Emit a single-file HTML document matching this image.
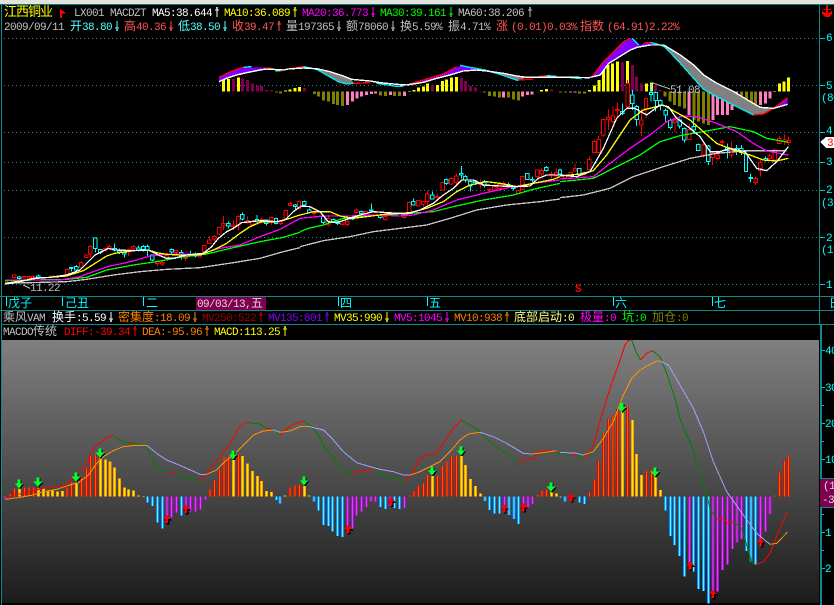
<!DOCTYPE html>
<html><head><meta charset="utf-8"><style>
html,body{margin:0;padding:0;background:#000;width:834px;height:605px;overflow:hidden}
svg{position:absolute;left:0;top:0;shape-rendering:crispEdges}
text{font:11px "Liberation Mono","WenQuanYi Zen Hei","Noto Sans CJK SC",monospace;letter-spacing:-.6px;white-space:pre}
.c{font-family:"WenQuanYi Zen Hei","Noto Sans CJK SC",sans-serif;font-size:12px;letter-spacing:0}
.n{vector-effect:non-scaling-stroke;fill:none}
.b{vector-effect:non-scaling-stroke;fill:#000;stroke-width:1}
.m{stroke-width:1.3}
.t{stroke-width:1}
.rb{stroke-width:1.4}
.gr{fill:none;stroke:#1a8a8a;stroke-dasharray:1 3}
</style></head><body>
<svg width="834" height="605" viewBox="0 0 834 605" xmlns="http://www.w3.org/2000/svg">
<defs>
<linearGradient id="pg" x1="0" y1="0" x2="0" y2="1"><stop offset="0" stop-color="#808080"/><stop offset="1" stop-color="#1c1c1c"/></linearGradient>
<path id="u" d="M3 7V17M2 8h2M1 10h4" fill="none"/>
<path id="d" d="M3 7V17M2 16h2M1 14h4" fill="none"/>
<g id="ga"><path fill="#000" transform="translate(3,3)" d="M-5-14h10v12h8l-13 15-13-15h8z"/><path fill="#00ff30" d="M-5-14h10v12h8l-13 15-13-15h8z"/></g>
<g id="ra"><path fill="#000" transform="translate(4,4)" d="M-4 12h8V0h8l-12-13-12 13h8z"/><path fill="#ff0000" d="M-4 12h8V0h8l-12-13-12 13h8z"/></g>
<g id="BR" fill="none">
<path transform="scale(.33333)" d="M30 229V222M44 229V205M73 229V203M87 229V203M101 229V203M201 229V202M215 229V187M244 229V172M259 229V145M272 229V108M287 229V103M630 229V208M644 229V180M658 229V148M672 229V113M686 229V110M716 229V103"/>
<path transform="translate(280,0) scale(.33333)" d="M30 229V203M45 229V197M58 229V193M388 229V226M402 229V213M416 229V197M430 229V190M443 229V165M472 229V168M487 229V138M501 229V124M515 229V108M530 229V106M772 229V225M786 229V212M800 229V208"/>
<path transform="translate(560,-85) scale(.33333)" d="M88 484V472M103 484V433M116 484V378M130 484V295M145 484V252M159 484V240M173 484V222M202 484V214M259 484V408M274 484V405M644 484V481M658 484V412M673 484V378M686 484V362"/>
</g>
<g id="BY" fill="none">
<path transform="scale(.33333)" d="M58 229V205M116 229V205M130 229V204M144 229V212M158 229V212M172 229V215M187 229V213M229 229V187M301 229V115M316 229V118M330 229V125M344 229V142M359 229V175M373 229V202M386 229V208M400 229V211M416 229V226M431 229V228M701 229V120M728 229V108M743 229V130M758 229V153M772 229V168M785 229V183M800 229V213M815 229V216"/>
<path transform="translate(280,0) scale(.33333)" d="M15 229V227M73 229V198M87 229V227M457 229V168M544 229V108M557 229V135M572 229V177M586 229V198M601 229V220M814 229V216M829 229V220"/>
<path transform="translate(560,-85) scale(.33333)" d="M187 484V230M217 484V255M230 484V357M245 484V420M287 484V425M301 484V465"/>
</g>
<g id="BB" fill="none">
<path transform="scale(.33333)" d="M443 229V248M458 229V258M472 229V308M487 229V326M544 229V287M830 229V240"/>
<path transform="translate(280,0) scale(.33333)" d="M0 229V250M102 229V245M115 229V272M130 229V315M145 229V318M158 229V335M172 229V348M187 229V351M301 229V261M316 229V267M344 229V264M358 229V267M615 229V243M629 229V270M644 229V280M659 229V280M687 229V285M702 229V297M716 229V312"/>
<path transform="translate(560,-85) scale(.33333)" d="M1 484V487M15 484V500M58 484V503M73 484V507M316 484V527M331 484V603M344 484V630M359 484V663M374 484V725M401 484V710M416 484V762M431 484V768M445 484V805M560 484V648M573 484V680M587 484V688"/>
</g>
<g id="BP" fill="none">
<path transform="scale(.33333)" d="M15 229V234M501 229V308M515 229V293M530 229V278M558 229V280M572 229V275M587 229V275M602 229V268M616 229V238"/>
<path transform="translate(280,0) scale(.33333)" d="M202 229V330M217 229V325M230 229V287M245 229V275M259 229V261M273 229V245M287 229V245M330 229V258M373 229V264M673 229V272M730 229V260M744 229V262M758 229V252"/>
<path transform="translate(560,-85) scale(.33333)" d="M30 484V498M388 484V690M459 484V775M473 484V770M488 484V705M503 484V688M517 484V642M531 484V623M545 484V612M602 484V620M617 484V590M630 484V537"/>
</g>
</defs>

<!-- chrome -->
<rect x="0" y="0" width="834" height="4" fill="#e4e2dc"/>
<rect x="0" y="4" width="834" height="1" fill="#008080"/>
<rect x="1" y="4" width="1" height="601" fill="#108a8a"/>
<rect x="819" y="4" width="1" height="321" fill="#108a8a"/>

<!-- grid -->
<path class="gr" d="M4 38.5H819M4 85.5H819M4 132.5H819M4 162.5H819M4 190.5H819M4 237.5H819M4 284.5H819"/>

<!-- MACDZT bars -->
<g transform="translate(210,60) scale(.33333)" stroke-width="9" fill="none">
<path stroke="#ffff00" d="M40 95V58M55 95V57M85 95V52M226 95V92M240 95V88M255 95V84M269 95V81M598 95V93M612 95V90M625 95V83M640 95V80M653 95V71M682 95V75M697 95V63M710 95V59M725 95V53M739 95V51M981 95V94M995 95V90M1009 95V87M1138 95V90M1153 95V77M1167 95V60"/>
<path stroke="#800050" d="M70 95V57M98 95V55M113 95V60M127 95V70M142 95V76M155 95V78M170 95V90M184 95V90M283 95V84M298 95V94M668 95V75M754 95V54M767 95V63M781 95V78M796 95V83M811 95V93M1024 95V89M1039 95V94"/>
<path stroke="#808000" d="M199 95V98M212 95V100M313 95V102M326 95V110M340 95V122M355 95V125M370 95V132M383 95V135M397 95V138M512 95V106M526 95V108M554 95V108M569 95V108M824 95V97M839 95V108M853 95V110M868 95V113M895 95V113M910 95V118M925 95V122M1052 95V98M1066 95V98M1109 95V101M1124 95V101"/>
<path stroke="#ff80c0" d="M412 95V135M427 95V125M441 95V115M455 95V110M470 95V105M484 95V102M497 95V101M541 95V105M583 95V108M881 95V113M938 95V110M952 95V105M966 95V103M1081 95V97M1095 95V98"/>
</g>
<g transform="translate(600,40) scale(.33333)" stroke-width="9" fill="none">
<path stroke="#ffff00" d="M10 155V90M24 155V75M38 155V70M53 155V65M82 155V63M140 155V130M155 155V128M524 155V153M538 155V130M552 155V125M566 155V113"/>
<path stroke="#800050" d="M67 155V68M97 155V75M110 155V110M125 155V130M167 155V135M180 155V150"/>
<path stroke="#808000" d="M195 155V170M210 155V185M224 155V195M238 155V200M253 155V205M282 155V240M296 155V245M311 155V250M325 155V255M425 155V200M440 155V205M455 155V200M467 155V195"/>
<path stroke="#ff80c0" d="M267 155V225M339 155V240M353 155V225M368 155V225M382 155V225M396 155V210M410 155V200M482 155V195M496 155V190M510 155V175"/>
</g>

<!-- ribbon -->
<g transform="translate(210,60) scale(.33333)">
<path fill="#8000ff" d="M27 65L50 55 80 45 110 38 150 30 170 27 165 23 125 22 110 18 80 28 50 40 27 52z"/>
<path fill="#808080" d="M320 26L360 35 400 48 425 58 430 70 410 72 385 65 350 45 320 28z"/>
<path fill="#8000ff" d="M590 75L640 67 680 55 720 45 760 33 800 30 825 30 780 22 755 15 700 42 650 57 590 73z"/>
<path fill="#808080" d="M830 33L880 40 920 48 950 52 925 62 870 43 830 35z"/>
<path class="n rb" stroke="#00e8f0" d="M100 22L125 20M195 32L215 33M280 20L320 28 350 45 385 65 410 72 430 70M500 70L560 79 580 79M750 16L780 22 825 30 870 43 925 62M1010 47L1040 49M1075 52L1115 56"/>
<path class="n rb" stroke="#ff0000" d="M27 52L50 40 80 28 100 22M165 24L185 24M210 32L235 27 280 20M430 70L480 68M590 75L650 57 700 42 740 20M925 60L970 57M985 50L1010 47"/>
<path class="n rb" stroke="#ffffff" d="M27 65L50 55 80 45 110 38 150 30 170 27 220 30 235 27 280 24 320 26 360 35 400 48 425 58 480 63 510 68 560 73 590 75 640 67 680 55 720 45 760 33 800 30 830 33 880 40 920 48 950 52 1000 52 1040 52 1090 52 1140 53"/>
</g>
<g transform="translate(417,0) scale(.33333)">
<path fill="#8000ff" d="M520 232L550 225 575 190 600 175 640 150 660 142 700 135 730 135 700 127 665 135 645 115 620 125 600 145 555 190z"/>
<path fill="#808080" d="M740 135L790 165 830 195 860 225 900 250 950 275 1000 305 1030 322 1070 325 1040 342 1010 345 960 320 900 290 860 268 830 235 790 190 745 142z"/>
<path fill="#8000ff" d="M1070 325L1112 313V293z"/>
<path class="n rb" stroke="#00e8f0" d="M645 115L665 135M700 127L730 135 745 142 790 190 830 235 860 268 900 290 960 320 1010 345"/>
<path class="n rb" stroke="#ff0000" d="M525 232L555 190 600 145 620 125 640 115M680 130L700 127M1010 345L1040 342 1070 325 1112 293"/>
<path class="n rb" stroke="#ffffff" d="M520 232L550 225 575 190 600 175 640 150 660 142 700 135 740 135 790 165 830 195 860 225 900 250 950 275 1000 305 1030 322 1070 325 1112 313"/>
</g>

<!-- candles + MA: section 1 -->
<g transform="translate(0,180) scale(.33333)">
<path class="n t" stroke="#ff0000" d="M43 283V297M73 288V295M87 287V295M100 287V295M158 287V292M202 265V285M244 245V265M259 225V233M271 195V232M316 202V215M328 195V210M386 205V228M400 195V212M472 240V258M487 243V258M500 225V238M529 208V222M557 225V243M600 225V232M613 195V218M628 168V192M643 165V185M658 140V165M670 108V150M700 120V150M715 105V152M743 110V130M757 120V137M785 112V130M814 110V135M842 120V135M857 90V118M871 65V78M897 62V90"/>
<path class="b" stroke="#ff0000" d="M38 285h10V292h-10zM68 289h10V294h-10zM82 289h10V294h-10zM95 289h10V294h-10zM153 288h10V291h-10zM197 268h10V283h-10zM239 247h10V263h-10zM254 225h10V233h-10zM266 199h10V222h-10zM311 205h10V212h-10zM323 200h10V205h-10zM381 208h10V216h-10zM395 200h10V207h-10zM467 245h10V250h-10zM482 247h10V252h-10zM495 226h10V236h-10zM524 212h10V218h-10zM552 232h10V236h-10zM595 226h10V231h-10zM608 197h10V215h-10zM623 180h10V190h-10zM638 170h10V177h-10zM653 142h10V162h-10zM665 130h10V138h-10zM695 135h10V140h-10zM710 110h10V135h-10zM738 122h10V127h-10zM752 125h10V133h-10zM780 118h10V125h-10zM809 112h10V128h-10zM837 125h10V130h-10zM852 92h10V115h-10zM866 70h10V77h-10zM892 65h10V85h-10z"/>
<path class="n t" stroke="#00ffff" d="M58 288V298M115 283V295M214 262V275M229 255V275M286 172V218M301 207V222M344 190V215M358 205V222M373 210V232M415 197V215M430 195V215M442 193V230M457 225V243M515 205V220M544 210V238M572 213V230M586 217V232M685 125V145M727 98V122M771 105V130M799 118V137M828 113V133M886 72V90"/>
<path class="b" stroke="#00ffff" d="M53 291h10V296h-10zM110 288h10V293h-10zM209 262h10V265h-10zM224 260h10V270h-10zM281 174h10V206h-10zM296 209h10V217h-10zM339 205h10V210h-10zM353 213h10V217h-10zM368 218h10V222h-10zM410 204h10V210h-10zM425 200h10V208h-10zM437 200h10V212h-10zM452 225h10V240h-10zM510 208h10V216h-10zM539 218h10V228h-10zM567 222h10V226h-10zM581 222h10V228h-10zM680 130h10V138h-10zM722 103h10V117h-10zM766 118h10V123h-10zM794 120h10V130h-10zM823 115h10V130h-10zM881 75h10V80h-10z"/>
<path class="n m" stroke="#c8c8c8" d="M15 310L200 305 260 298 340 285 420 275 500 268 600 263 700 248 780 235 850 215 900 203"/>
<path class="n m" stroke="#00ff00" d="M15 302L200 298 260 292 320 270 400 255 470 245 540 232 620 222 700 203 780 185 850 172 900 157"/>
<path class="n m" stroke="#ff00ff" d="M15 300L180 300 240 290 280 275 330 258 370 250 410 240 450 228 500 222 600 222 660 205 720 195 780 170 840 148 900 115"/>
<path class="n m" stroke="#ffff00" d="M15 310L60 303 110 295 200 288 250 272 285 250 320 228 345 220 400 212 445 210 470 218 500 223 540 225 600 225 640 210 680 190 720 160 750 140 785 125 830 125 860 118 900 105"/>
<path class="n m" stroke="#ffffff" d="M15 312L60 305 100 295 150 292 200 285 240 270 265 245 285 225 325 205 345 210 400 212 445 210 475 225 500 235 520 235 560 225 610 220 635 200 655 175 680 155 700 145 725 128 780 122 830 125 855 120 880 95 900 80"/>
<path class="n t" stroke="#c0c0c0" d="M70 315L90 325"/>
</g>

<!-- section 2 -->
<g transform="translate(300,150) scale(.33333)">
<path class="n t" stroke="#ff0000" d="M42 185V198M85 195V230M127 218V224M142 208V230M169 175V192M199 183V197M228 183V190M256 197V212M270 185V195M313 195V205M328 155V192M355 150V170M370 153V170M382 122V165M412 130V155M428 95V122M454 82V105M469 70V110M541 88V115M568 115V125M583 103V125M598 100V118M611 95V110M655 120V132M667 78V120M712 58V85M725 55V78M754 65V85M769 55V80"/>
<path class="b" stroke="#ff0000" d="M37 188h10V190h-10zM80 205h10V225h-10zM122 219h10V223h-10zM137 215h10V223h-10zM164 180h10V188h-10zM194 185h10V195h-10zM223 184h10V188h-10zM251 200h10V208h-10zM265 187h10V193h-10zM308 197h10V203h-10zM323 157h10V190h-10zM350 152h10V168h-10zM365 155h10V162h-10zM377 132h10V155h-10zM407 140h10V143h-10zM423 98h10V120h-10zM449 85h10V102h-10zM464 78h10V98h-10zM536 98h10V103h-10zM563 118h10V120h-10zM578 110h10V120h-10zM593 103h10V115h-10zM606 100h10V104h-10zM650 122h10V130h-10zM662 80h10V118h-10zM707 60h10V80h-10zM720 62h10V72h-10zM749 72h10V75h-10zM764 68h10V78h-10z"/>
<path class="n t" stroke="#00ffff" d="M13 152V170M28 175V190M70 195V222M100 205V218M113 212V225M157 200V210M184 182V192M214 160V185M241 192V205M340 145V165M397 125V148M439 85V105M484 48V85M496 75V98M511 92V125M526 90V105M553 90V112M625 97V112M640 108V122M682 70V90M697 80V97M739 48V65"/>
<path class="b" stroke="#00ffff" d="M8 155h10V165h-10zM23 180h10V187h-10zM65 200h10V218h-10zM95 208h10V215h-10zM108 215h10V220h-10zM152 203h10V207h-10zM179 184h10V190h-10zM209 180h10V183h-10zM236 196h10V202h-10zM335 155h10V165h-10zM392 135h10V147h-10zM434 88h10V100h-10zM479 70h10V75h-10zM491 80h10V90h-10zM506 95h10V108h-10zM521 93h10V98h-10zM548 95h10V107h-10zM620 103h10V108h-10zM635 112h10V116h-10zM677 70h10V88h-10zM692 88h10V90h-10zM734 52h10V62h-10z"/>
<path class="n m" stroke="#c8c8c8" d="M0 290L70 272 150 260 220 245 300 235 380 225 450 205 530 180 620 165 720 155 780 147"/>
<path class="n m" stroke="#00ff00" d="M0 245L25 235 70 225 130 205 200 198 300 192 400 185 460 170 550 150 640 135 700 118 780 100"/>
<path class="n m" stroke="#ff00ff" d="M0 205L70 198 150 198 230 195 300 198 340 195 400 180 470 150 550 130 640 110 700 100 780 90"/>
<path class="n m" stroke="#ffff00" d="M0 195L40 185 90 185 120 198 160 205 200 200 260 192 330 188 380 175 430 155 470 125 510 105 560 95 600 100 650 110 700 100 760 88 780 80"/>
<path class="n m" stroke="#ffffff" d="M0 168L30 170 60 185 85 215 110 218 150 205 180 195 220 185 320 192 360 180 400 160 430 135 460 115 485 90 520 90 550 105 600 108 650 110 690 108 715 85 740 75 780 75"/>
</g>

<!-- section 3 -->
<g transform="translate(560,80) scale(.33333)">
<path class="n t" stroke="#ff0000" d="M15 282V298M32 275V300M45 250V275M73 275V285M88 230V272M103 180V220M116 168V220M130 115V170M145 88V150M159 80V130M172 68V115M203 0V85M244 85V170M258 55V115M345 105V158M388 132V180M431 190V232M458 215V255M473 210V242M487 178V198M514 185V232M587 290V315M601 235V290M629 222V245M644 205V245M658 168V192M674 162V195M686 170V195"/>
<path class="b" stroke="#ff0000" d="M10 288h10V294h-10zM27 277h10V285h-10zM40 265h10V273h-10zM68 277h10V283h-10zM83 238h10V268h-10zM98 185h10V218h-10zM111 178h10V218h-10zM125 118h10V165h-10zM140 113h10V118h-10zM154 108h10V125h-10zM167 88h10V92h-10zM198 10h10V80h-10zM239 120h10V135h-10zM253 55h10V85h-10zM340 120h10V128h-10zM383 148h10V178h-10zM426 195h10V225h-10zM453 220h10V232h-10zM468 225h10V235h-10zM482 184h10V188h-10zM509 212h10V225h-10zM582 295h10V308h-10zM596 247h10V272h-10zM624 228h10V236h-10zM639 210h10V240h-10zM653 175h10V190h-10zM669 180h10V185h-10zM681 182h10V188h-10z"/>
<path class="n t" stroke="#00ffff" d="M0 265V285M58 265V285M187 70V105M217 30V90M230 75V138M273 10V65M287 35V95M301 58V92M317 85V125M331 115V148M359 115V145M373 143V188M401 108V160M415 190V213M445 195V255M502 190V235M530 195V225M544 195V225M558 210V275M572 280V308M617 230V245"/>
<path class="b" stroke="#00ffff" d="M-5 270h10V282h-10zM53 265h10V283h-10zM182 95h10V100h-10zM212 45h10V70h-10zM225 80h10V118h-10zM268 37h10V43h-10zM282 38h10V62h-10zM296 62h10V75h-10zM312 92h10V105h-10zM326 122h10V142h-10zM354 120h10V138h-10zM368 145h10V180h-10zM396 140h10V150h-10zM410 193h10V212h-10zM440 198h10V245h-10zM497 203h10V212h-10zM525 205h10V212h-10zM539 205h10V218h-10zM553 222h10V275h-10zM567 292h10V296h-10zM612 235h10V240h-10z"/>
<path class="n m" stroke="#c8c8c8" d="M0 353L70 345 150 325 220 290 310 260 390 235 470 220 560 212 680 212"/>
<path class="n m" stroke="#00ff00" d="M0 305L100 295 170 260 240 225 300 185 360 167 430 155 510 140 580 155 620 175 685 187"/>
<path class="n m" stroke="#ff00ff" d="M0 297L100 290 150 250 210 205 270 165 320 125 370 108 410 110 470 130 530 155 580 190 620 213 685 225"/>
<path class="n m" stroke="#ffff00" d="M0 288L60 282 100 272 140 225 180 165 210 120 250 90 310 75 345 95 390 120 430 155 470 190 520 210 570 225 610 240 650 243 685 235"/>
<path class="n m" stroke="#ffffff" d="M0 285L50 290 90 275 130 205 170 115 200 85 225 85 260 105 300 75 325 80 350 115 390 145 420 170 450 215 480 215 510 205 555 215 590 265 620 272 650 245 685 200"/>
</g>
<path fill="none" stroke="#c0c0c0" d="M653 83L670 89"/>
<text x="670" y="93" fill="#c0c0c0">51.08</text>
<text x="30" y="291" fill="#c0c0c0">11.22</text>
<text x="575" y="292" fill="#ff0000" style="font-weight:bold">S</text>

<!-- header text -->
<text x="4" y="16" fill="#ffff00"><tspan class="c" style="font-size:13px;letter-spacing:-1px">江西铜业</tspan></text>
<path fill="#ff0000" d="M60 9L66 13 62 14V18H60z"/>
<text x="74" y="16" fill="#c0c0c0">LX001 MACDZT</text>
<text x="152" y="16" fill="#ffffff">MA5:38.644</text><use href="#u" x="214" stroke="#ffffff"/>
<text x="224" y="16" fill="#ffff00">MA10:36.089</text><use href="#u" x="292" stroke="#ffff00"/>
<text x="302" y="16" fill="#ff00ff">MA20:36.773</text><use href="#d" x="370" stroke="#ff00ff"/>
<text x="380" y="16" fill="#00ff00">MA30:39.161</text><use href="#d" x="448" stroke="#00ff00"/>
<text x="458" y="16" fill="#c0c0c0">MA60:38.206</text><use href="#u" x="527" stroke="#c0c0c0"/>

<text x="4" y="30" fill="#c0c0c0">2009/09/11</text>
<text x="70" y="30" fill="#55ffff"><tspan class="c">开</tspan>38.80</text><use href="#d" x="114" y="14" stroke="#55ffff"/>
<text x="124" y="30" fill="#ff5555"><tspan class="c">高</tspan>40.36</text><use href="#d" x="168" y="14" stroke="#ff5555"/>
<text x="178" y="30" fill="#55ffff"><tspan class="c">低</tspan>38.50</text><use href="#d" x="222" y="14" stroke="#55ffff"/>
<text x="232" y="30" fill="#ff5555"><tspan class="c">收</tspan>39.47</text><use href="#u" x="276" y="14" stroke="#ff5555"/>
<text x="286" y="30" fill="#c0c0c0"><tspan class="c">量</tspan>197365</text><use href="#d" x="336" y="14" stroke="#c0c0c0"/>
<text x="346" y="30" fill="#c0c0c0"><tspan class="c">额</tspan>78060</text><use href="#d" x="390" y="14" stroke="#c0c0c0"/>
<text x="400" y="30" fill="#c0c0c0"><tspan class="c">换</tspan>5.59%</text>
<text x="448" y="30" fill="#c0c0c0"><tspan class="c">振</tspan>4.71%</text>
<text x="496" y="30" fill="#ff5555"><tspan class="c">涨</tspan></text>
<text x="511" y="30" fill="#ff5555">(0.01)0.03%</text>
<text x="580" y="30" fill="#ff5555"><tspan class="c">指数</tspan></text>
<text x="607" y="30" fill="#ff5555">(64.91)2.22%</text>

<!-- right axis top -->
<path fill="#ff0000" d="M826 5h2v2h-2zM826 7h2v8h-2zM823 9h8v1h-8zM822 11l2 1 3 2 3-2 2-1v3l-3 3h-4l-3-3z"/>
<g fill="#00ffff">
<text x="826" y="41">6</text><text x="826" y="89">5</text><text x="821" y="101">(80</text><text x="826" y="134">4</text><text x="826" y="165">3</text><text x="826" y="193">2</text><text x="821" y="206">(36</text><text x="826" y="241">2</text><text x="821" y="253">(19</text><text x="826" y="288">1</text>
</g>
<path fill="none" stroke="#00c8c8" d="M820 38.5h5M820 85.5h5M820 132.5h5M820 162.5h5M820 190.5h5M820 237.5h5M820 284.5h5"/>
<path fill="#ffffff" d="M820 142L826 137H834V148H826z"/>
<text x="827" y="146" fill="#ff0000">3</text>

<!-- tabs -->
<rect x="0" y="296" width="834" height="1" fill="#108a8a"/>
<rect x="0" y="310" width="834" height="1" fill="#108a8a"/>
<rect x="2" y="324" width="832" height="1" fill="#108a8a"/>
<rect x="196" y="297" width="70" height="13" fill="#800050"/>
<path fill="none" stroke="#00ffff" d="M6.5 297V306M62.5 297V306M143.5 297V306M338.5 297V306M427.5 297V306M613.5 297V306M712.5 297V306"/>
<g fill="#00ffff">
<text x="8" y="307"><tspan class="c">戊子</tspan></text>
<text x="65" y="307"><tspan class="c">己丑</tspan></text>
<text x="146" y="307"><tspan class="c">二</tspan></text>
<text x="340" y="307"><tspan class="c">四</tspan></text>
<text x="429" y="307"><tspan class="c">五</tspan></text>
<text x="615" y="307"><tspan class="c">六</tspan></text>
<text x="714" y="307"><tspan class="c">七</tspan></text>
<text x="829" y="307"><tspan class="c">日</tspan></text>
</g>
<text x="197" y="307" fill="#e8d0dc">09/03/13,<tspan class="c">五</tspan></text>

<!-- indicator rows -->
<text x="3" y="321" fill="#c0c0c0"><tspan class="c">乘风</tspan>VAM</text>
<text x="52" y="321" fill="#ffffff"><tspan class="c">换手</tspan>:5.59</text><use href="#d" x="108" y="305" stroke="#ffffff"/>
<text x="118" y="321" fill="#ff8000"><tspan class="c">密集度</tspan>:18.09</text><use href="#d" x="192" y="305" stroke="#ff8000"/>
<text x="202" y="321" fill="#a00000">MV250:522</text><use href="#u" x="258" y="305" stroke="#c00000"/>
<text x="268" y="321" fill="#8000ff">MV135:801</text><use href="#u" x="324" y="305" stroke="#8000ff"/>
<text x="334" y="321" fill="#ffff00">MV35:990</text><use href="#d" x="384" y="305" stroke="#ffff00"/>
<text x="394" y="321" fill="#ff00ff">MV5:1045</text><use href="#d" x="444" y="305" stroke="#ff00ff"/>
<text x="454" y="321" fill="#ff8000">MV10:938</text><use href="#u" x="504" y="305" stroke="#ff8000"/>
<text x="514" y="321" fill="#ffff80"><tspan class="c">底部启动</tspan>:0</text>
<text x="580" y="321" fill="#ff00ff"><tspan class="c">极量</tspan>:0</text>
<text x="622" y="321" fill="#00ff00"><tspan class="c">坑</tspan>:0</text>
<text x="652" y="321" fill="#808000"><tspan class="c">加仓</tspan>:0</text>

<text x="3" y="335" fill="#c0c0c0">MACDO<tspan class="c">传统</tspan></text>
<text x="64" y="335" fill="#ff0000">DIFF:-39.34</text><use href="#u" x="132" y="319" stroke="#ff0000"/>
<text x="142" y="335" fill="#ff8000">DEA:-95.96</text><use href="#u" x="204" y="319" stroke="#ff8000"/>
<text x="214" y="335" fill="#ffff00">MACD:113.25</text><use href="#u" x="282" y="319" stroke="#ffff00"/>

<!-- lower panel -->
<rect x="2" y="340" width="817" height="263" fill="url(#pg)"/>
<rect x="820" y="325" width="2" height="280" fill="#108a8a"/>
<g transform="translate(0,420)">
<use href="#BR" stroke="#d01000" stroke-width="9"/><use href="#BR" stroke="#ff5a00" stroke-width="3"/>
<use href="#BY" stroke="#ff9c00" stroke-width="9"/><use href="#BY" stroke="#ffe800" stroke-width="3"/>
<use href="#BB" stroke="#0090ff" stroke-width="9"/><use href="#BB" stroke="#70eaff" stroke-width="3"/>
<use href="#BP" stroke="#a010c8" stroke-width="9"/><use href="#BP" stroke="#e040f0" stroke-width="3"/>
</g>
<g transform="translate(0,420) scale(.33333)">
<path class="n t" stroke="#ff0000" d="M15 238L40 225 70 220 100 212 130 205 160 200 190 198 215 180 245 150 265 115 285 78 300 70 325 50 340 48M385 68H400M505 158H528M600 185L615 165 640 135 660 110 680 85 700 55 715 25 735 8 745 8M798 25H815"/>
<path class="n t" stroke="#008000" d="M340 48L360 60 385 70 400 70 415 75 440 80 460 125 480 150 500 158M530 160L550 172 580 178 600 185M745 8L780 12 800 25M815 28L840 40"/>
<path class="n t" stroke="#ff9000" d="M15 238L60 232 100 225 130 215 170 208 210 195 240 185 265 165 290 130 310 110 340 92 370 80 400 77 440 76M620 163L650 150 680 120 700 105 730 75 760 45 790 33 820 30"/>
<path class="n t" stroke="#a0a0ff" d="M440 76L470 100 500 120 530 132 560 145 600 163 620 163M820 30L840 37"/>
</g>
<g transform="translate(280,420) scale(.33333)">
<path class="n t" stroke="#ff0000" d="M0 45L30 18 60 5 72 3M215 165L230 155 270 150 280 147M372 185L395 165 420 115 440 105 470 100 490 70 520 25 545 0M715 135L730 120 760 115 775 95 800 92 825 97"/>
<path class="n t" stroke="#008000" d="M72 3L95 20 115 45 135 85 155 105 175 135 190 155 215 165M285 147L300 160 320 170 350 178 372 185M545 0L570 15 600 35 620 55 640 75 680 100 700 115 715 135M825 97L840 100"/>
<path class="n t" stroke="#ff9000" d="M0 37L30 33 60 20 85 19M392 165L420 155 450 140 480 125 510 95 540 60 565 42 600 37M755 102L790 98 830 92"/>
<path class="n t" stroke="#a0a0ff" d="M85 19L130 30 160 60 190 95 230 128 270 140 300 148 340 155 370 165 392 165M600 37L640 50 680 70 730 100 755 102"/>
</g>
<g transform="translate(560,335) scale(.33333)">
<path class="n t" stroke="#008000" d="M0 352L30 362M50 358L73 372M215 15L228 50 242 75M278 47L300 65 320 115 345 190 360 250 375 290 395 330 415 400 435 460 450 520 470 552M520 560L545 580 560 630 575 680 585 690"/>
<path class="n t" stroke="#ff0000" d="M30 362L50 358M73 372L100 330 125 240 150 160 175 90 195 30 205 17 215 15M242 75L260 55 278 47M470 552L490 550 500 565 520 560M585 690L610 680 630 655 655 590 682 532"/>
<path class="n t" stroke="#ff9000" d="M70 360L100 350 130 310 160 260 190 180 215 130 240 105 270 88 290 78 300 78M630 628L650 625 682 592"/>
<path class="n t" stroke="#a0a0ff" d="M0 352L50 355 70 360M300 78L325 90 360 150 400 220 430 290 460 380 500 470 550 540 590 595 630 628"/>
</g>
<!-- arrows -->
<g transform="translate(0,420) scale(.33333)">
<use href="#ga" x="57" y="192"/><use href="#ga" x="114" y="187"/><use href="#ga" x="228" y="172"/><use href="#ga" x="300" y="100"/><use href="#ga" x="699" y="105"/>
<use href="#ra" x="500" y="297"/><use href="#ra" x="557" y="267"/>
</g>
<g transform="translate(280,420) scale(.33333)">
<use href="#ga" x="72" y="183"/><use href="#ga" x="456" y="153"/><use href="#ga" x="543" y="93"/><use href="#ga" x="813" y="202"/>
<use href="#ra" x="204" y="327"/><use href="#ra" x="333" y="245"/><use href="#ra" x="672" y="265"/><use href="#ra" x="730" y="262"/>
</g>
<g transform="translate(560,335) scale(.33333)">
<use href="#ga" x="185" y="218"/><use href="#ga" x="285" y="412"/>
<use href="#ra" x="33" y="487"/><use href="#ra" x="390" y="692"/><use href="#ra" x="458" y="777"/><use href="#ra" x="602" y="622"/>
</g>

<!-- right axis bottom -->
<path fill="none" stroke="#00c8c8" d="M822 350.5h3M822 387.5h3M822 423.5h3M822 459.5h3M822 532.5h3M822 568.5h3M822 405.5h2M822 441.5h2M822 514.5h2M822 550.5h2"/>
<g fill="#00ffff">
<text x="825" y="354">40</text><text x="825" y="391">30</text><text x="825" y="427">20</text><text x="825" y="463">10</text><text x="825" y="536">1</text><text x="825" y="572">2</text>
</g>
<rect x="820" y="478" width="14" height="30" fill="#800050"/>
<rect x="820" y="478" width="14" height="1" fill="#108a8a"/><rect x="820" y="507" width="14" height="1" fill="#108a8a"/>
<text x="823" y="489" fill="#e8d0dc">(1</text>
<text x="822" y="503" fill="#e8d0dc">-3</text>
</svg>
</body></html>
